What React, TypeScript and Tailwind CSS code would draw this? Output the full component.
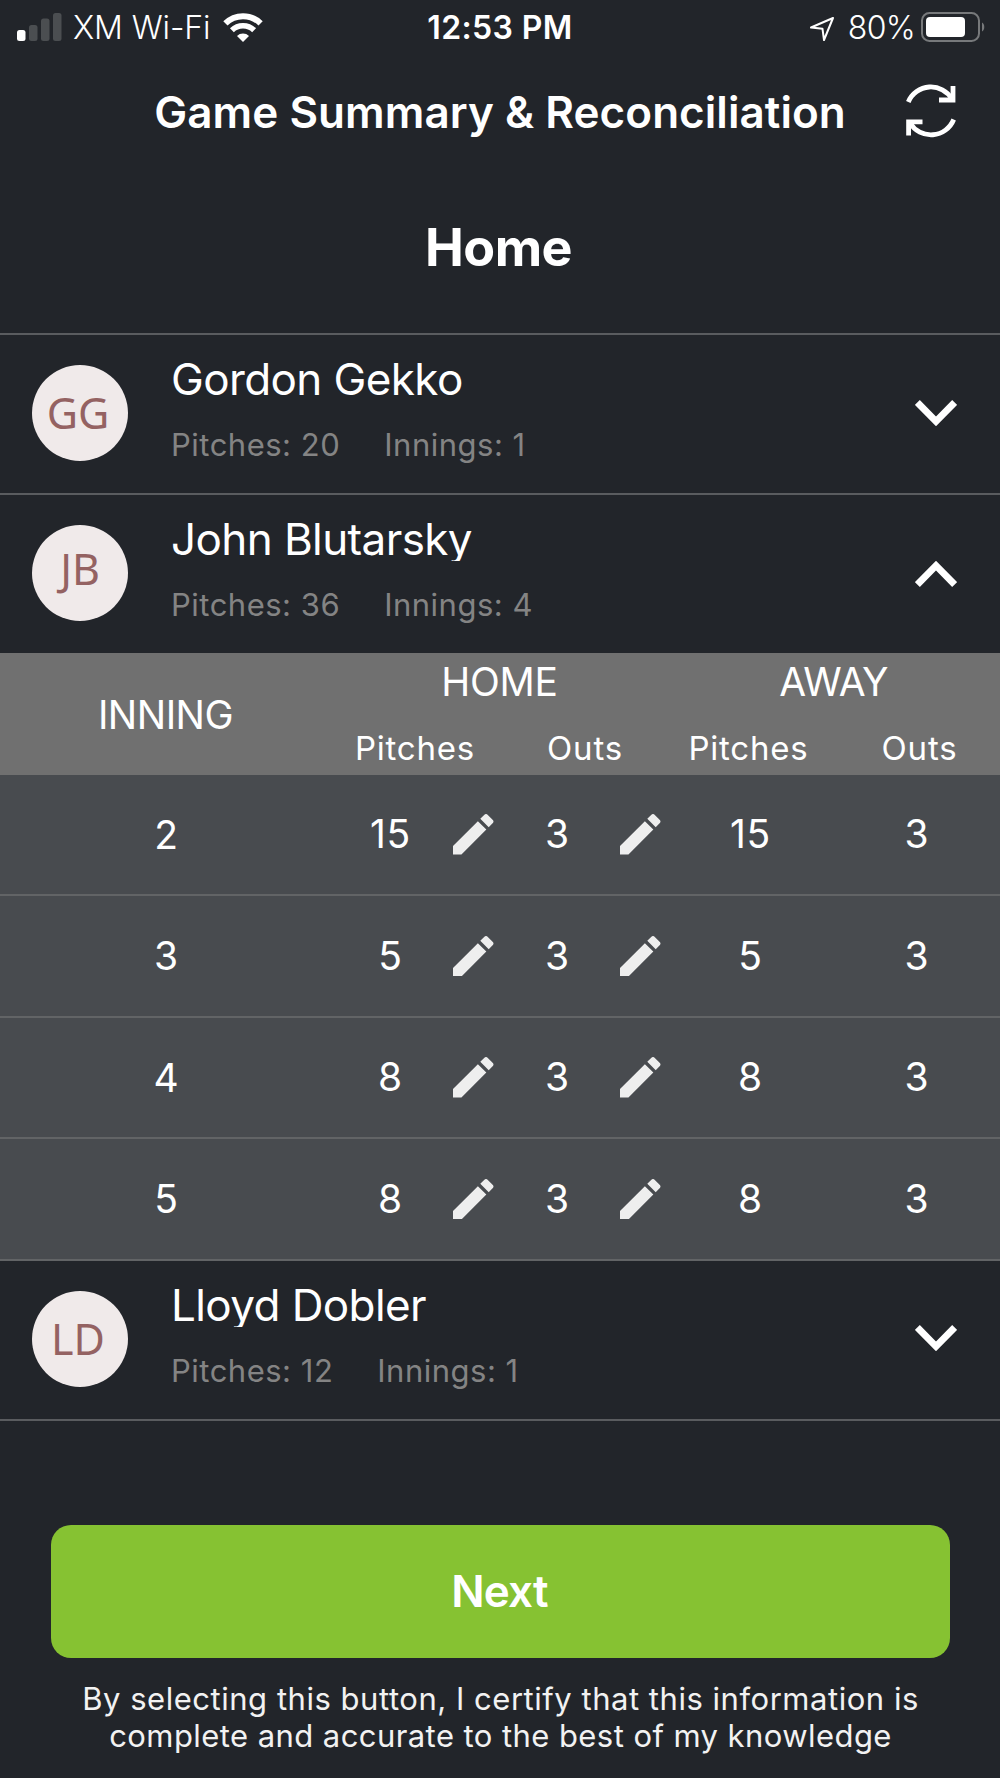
import React, { useState } from "react";

type Inning = { inning: number; pitches: number; outs: number };

type Player = {
  name: string;
  initials: string;
  pitches: number;
  innings: number;
  detail: Inning[];
};

const players: Player[] = [
  { name: "Gordon Gekko", initials: "GG", pitches: 20, innings: 1, detail: [] },
  {
    name: "John Blutarsky",
    initials: "JB",
    pitches: 36,
    innings: 4,
    detail: [
      { inning: 2, pitches: 15, outs: 3 },
      { inning: 3, pitches: 5, outs: 3 },
      { inning: 4, pitches: 8, outs: 3 },
      { inning: 5, pitches: 8, outs: 3 },
    ],
  },
  { name: "Lloyd Dobler", initials: "LD", pitches: 12, innings: 1, detail: [] },
];

function StatusBar() {
  return (
    <div className="grid h-[54px] grid-cols-3 items-center pl-[17px] pr-[15px] text-[32px] leading-[54px]">
      <div className="flex items-center">
        <svg width="45" height="28" viewBox="0 0 45 28" className="mb-[2px] shrink-0">
          <rect x="0" y="17" width="8.5" height="11" rx="2.5" fill="#fff" />
          <rect x="12" y="12" width="8.5" height="16" rx="2.5" fill="#4b4e51" />
          <rect x="24" y="5.5" width="8.5" height="22.5" rx="2.5" fill="#4b4e51" />
          <rect x="36" y="0" width="8.5" height="28" rx="2.5" fill="#4b4e51" />
        </svg>
        <span className="ml-[11px] font-light tracking-[-0.1px] whitespace-nowrap">XM Wi-Fi</span>
        <svg width="40" height="30" viewBox="0 0 40 30" className="ml-[13px] shrink-0" fill="none" stroke="#fff">
          <path d="M2.4 10.4a25 25 0 0 1 35.2 0" strokeWidth="6" />
          <path d="M8.9 17.2a15.8 15.8 0 0 1 22.2 0" strokeWidth="5.5" />
          <path d="M20 29l-6-6a8.6 8.6 0 0 1 12 0z" fill="#fff" stroke="none" />
        </svg>
      </div>
      <div className="pt-[1px] pr-[2px] text-center font-semibold tracking-[0.4px]">12:53 PM</div>
      <div className="flex items-center justify-end">
        <svg width="26" height="26" viewBox="0 0 26 26" className="mt-[2px] mr-[13px]" fill="none" stroke="#fff" strokeWidth="2" strokeLinejoin="round">
          <path d="M24 2L2 11.5l11.5 1.3L15 24z" />
        </svg>
        <span className="pt-[1px] font-light tracking-[-0.7px]">80%</span>
        <svg width="64" height="30" viewBox="0 0 64 30" className="mb-[2px] ml-[6px]">
          <rect x="1" y="1" width="57" height="28" rx="7.5" fill="none" stroke="#77797b" strokeWidth="2" />
          <rect x="5" y="5" width="39" height="20" rx="4" fill="#fff" />
          <path d="M61 10.500c3 1.500 3 7.500 0 9z" fill="#77797b" />
        </svg>
      </div>
    </div>
  );
}

function RefreshIcon() {
  return (
    <svg width="50" height="54" viewBox="0 0 50 54" fill="none" stroke="#fff" strokeWidth="4.800">
      <path d="M2.300 18A24.500 24.500 0 0 1 46 15" />
      <path d="M33 16H47V2" />
      <path d="M47.700 35.500A24.500 24.500 0 0 1 4 39" />
      <path d="M16.500 37.800H2.600V51.500" />
    </svg>
  );
}

function Chevron({ up }: { up?: boolean }) {
  return (
    <svg width="42" height="27" viewBox="0 0 42 27" fill="none" stroke="#fff" strokeWidth="6.800">
      <path d={up ? "M2.400 24.500L21 5.500L39.600 24.500" : "M2.400 2.500L21 21.500L39.600 2.500"} />
    </svg>
  );
}

function EditIcon() {
  return (
    <svg width="40.500" height="40.500" viewBox="3 3 18 18" fill="#eee" className="ml-[5px] shrink-0">
      <path d="M3 17.250V21h3.750L17.810 9.940l-3.750-3.750L3 17.250zM20.710 7.040c.39-.39.39-1.020 0-1.410l-2.340-2.340c-.39-.39-1.020-.39-1.410 0l-1.830 1.830 3.750 3.750 1.830-1.830z" />
    </svg>
  );
}

function InningTable({ rows }: { rows: Inning[] }) {
  return (
    <div className="bg-[#484b4f] text-[39px]">
      <div className="grid h-[121.500px] grid-cols-[333px_333px_334px] bg-[#707070] text-center tracking-[-0.3px]">
        <div className="pt-[1px] pr-[2px] leading-[122px] tracking-[-0.5px]">INNING</div>
        <div>
          <div className="h-[58px] leading-[57px]">HOME</div>
          <div className="flex h-[63px] text-[33px] leading-[74px] tracking-[0.8px]">
            <span className="w-[163px] pl-[1px]">Pitches</span>
            <span className="w-[170px] pl-[8px]">Outs</span>
          </div>
        </div>
        <div>
          <div className="h-[58px] pl-[1px] leading-[57px] tracking-[-0.7px]">AWAY</div>
          <div className="flex h-[63px] text-[33px] leading-[74px] tracking-[0.8px]">
            <span className="w-[163px] pl-[2px]">Pitches</span>
            <span className="w-[170px] pl-[11px]">Outs</span>
          </div>
        </div>
      </div>
      {rows.map((row) => (
        <div
          key={row.inning}
          className="grid h-[121.500px] grid-cols-[333px_115px_52px_115px_52px_167px_166px] items-center border-b-2 border-[#626466] text-center tracking-[0.8px]"
        >
          <span className="pt-[1px]">{row.inning}</span>
          <span>{row.pitches}</span>
          <EditIcon />
          <span>{row.outs}</span>
          <EditIcon />
          <span>{row.pitches}</span>
          <span>{row.outs}</span>
        </div>
      ))}
    </div>
  );
}

export default function App() {
  const [openPlayer, setOpenPlayer] = useState("John Blutarsky");

  return (
    <div className="h-[1778px] w-[1000px] overflow-hidden bg-[#22252a] font-['Inter',sans-serif] text-white">
      <StatusBar />

      {/* Header */}
      <header className="grid h-[114px] grid-cols-[120px_760px_120px] items-center">
        <h1 className="col-start-2 pt-[2px] text-center text-[44px] font-semibold tracking-[0.05px] whitespace-nowrap">
          Game Summary &amp; Reconciliation
        </h1>
        <button className="ml-[26px]">
          <RefreshIcon />
        </button>
      </header>
      <h2 className="h-[165px] pr-[3px] text-center text-[52px] leading-[159px] font-bold tracking-[-0.5px]">Home</h2>

      {/* Players */}
      <div className="border-t-2 border-[#5a5c5f]">
        {players.map((player) => {
          const open = player.name === openPlayer;
          return (
            <div key={player.name}>
              <div
                className={
                  "flex items-center pb-[2px] pl-[32px] pr-[43px] last:pb-[2px] " +
                  (open ? "h-[158px]" : "h-[160px] border-b-2 border-[#5a5c5f]")
                }
                onClick={() => setOpenPlayer(open ? "" : player.name)}
              >
                <div
                  className={
                    "flex h-[96px] w-[96px] shrink-0 items-center justify-center rounded-full bg-[#f0eaea] font-['Noto_Sans',sans-serif] text-[43px] text-[#946262] " +
                    (player.initials.startsWith("J") ? "pb-[8px]" : "pt-[1px] pr-[4px]")
                  }
                >
                  {player.initials}
                </div>
                <div className="ml-[43px] h-[156px] flex-1">
                  {/* descenders are cut by the name's box */}
                  <div className="mb-[10px] h-[66px] overflow-hidden text-[44px] leading-[89px] tracking-[-0.6px]">
                    {player.name}
                  </div>
                  <div className="flex gap-[44px] text-[31px] leading-[68px] tracking-[0.5px] text-[#848484]">
                    <span>Pitches: {player.pitches}</span>
                    <span>Innings: {player.innings}</span>
                  </div>
                </div>
                <Chevron up={open} />
              </div>
              {open && <InningTable rows={player.detail} />}
            </div>
          );
        })}
      </div>

      {/* Footer */}
      <footer className="pt-[104px] pr-[50px] pl-[51px] text-center">
        <button className="h-[133px] w-full rounded-[20px] bg-[#86c232] pr-[2px] text-[44px] font-semibold tracking-[-0.8px]">
          Next
        </button>
        <p className="mt-[22px] text-[31px] leading-[37px] tracking-[0.53px] text-[#f2f2f2]">
          By selecting this button, I certify that this information is
          <br />
          <span className="tracking-[0.43px]">complete and accurate to the best of my knowledge</span>
        </p>
      </footer>
    </div>
  );
}
